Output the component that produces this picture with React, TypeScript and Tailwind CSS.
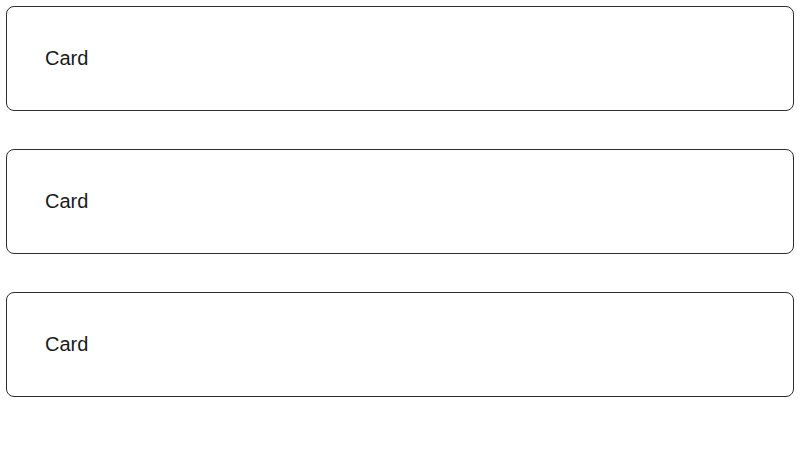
export default function App() {
  const cards = ["Card", "Card", "Card"];
  return (
    <div className="w-[800px] h-[456px] bg-white p-[6px] flex flex-col gap-[38px]" style={{ fontFamily: '"Liberation Sans", Arial, sans-serif' }}>
      {cards.map((c, i) => (
        <div key={i} className="h-[105px] border border-[#2e2e2e] rounded-lg px-[38px] pb-[2px] flex items-center text-[20px] leading-[28px] text-[#1a1a1a]">
          {c}
        </div>
      ))}
    </div>
  );
}
